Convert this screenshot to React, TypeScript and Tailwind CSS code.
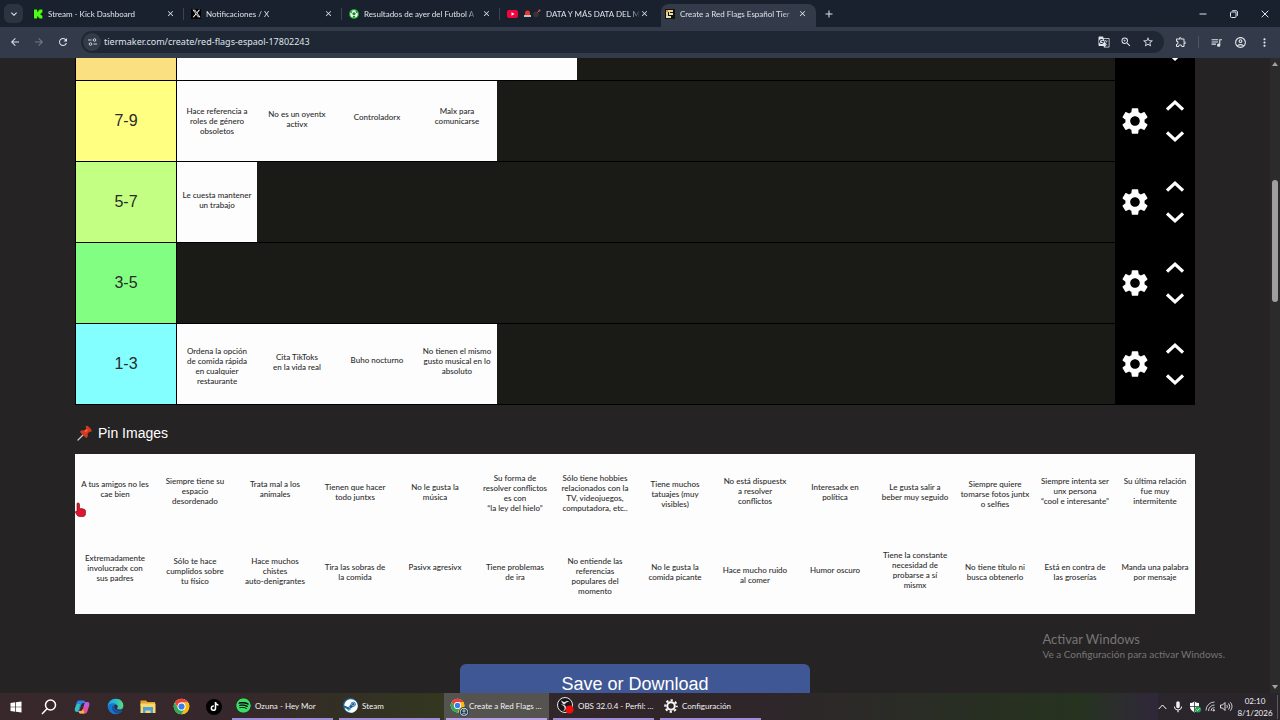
import React from "react";
import {
  MdGTranslate,
  MdZoomIn,
  MdStarBorder,
  MdOutlineExtension,
  MdQueueMusic,
  MdMoreVert,
  MdOutlineAccountCircle,
  MdSettings,
  MdArrowBack,
  MdArrowForward,
  MdRefresh,
  MdClose,
  MdAdd,
  MdMic,
  MdKeyboardArrowDown,
} from "react-icons/md";
import { FaXTwitter, FaSteam, FaTiktok, FaSpotify } from "react-icons/fa6";

type Card = { lines: string[]; top: string };

const T1 = "pt-[16px]";
const T2 = "pt-[19px]";
const T3 = "pt-[22px]";
const T4 = "pt-[25px]";
const T5 = "pt-[28px]";
const T6 = "pt-[31px]";

const blank: Card = { lines: [], top: T1 };

const tiers: { label: string; color: string; cards: Card[] }[] = [
  {
    label: "7-9",
    color: "bg-[#ffff82]",
    cards: [
      { lines: ["Hace referencia a", "roles de género", "obsoletos"], top: T4 },
      { lines: ["No es un oyentx", "activx"], top: T5 },
      { lines: ["Controladorx"], top: T6 },
      { lines: ["Malx para", "comunicarse"], top: T4 },
    ],
  },
  {
    label: "5-7",
    color: "bg-[#c3ff82]",
    cards: [{ lines: ["Le cuesta mantener", "un trabajo"], top: T5 }],
  },
  { label: "3-5", color: "bg-[#82ff82]", cards: [] },
  {
    label: "1-3",
    color: "bg-[#84ffff]",
    cards: [
      { lines: ["Ordena la opción", "de comida rápida", "en cualquier", "restaurante"], top: T3 },
      { lines: ["Cita TikToks", "en la vida real"], top: T5 },
      { lines: ["Buho nocturno"], top: T6 },
      { lines: ["No tienen el mismo", "gusto musical en lo", "absoluto"], top: T3 },
    ],
  },
];

const pool: Card[] = [
  { lines: ["A tus amigos no les", "cae bien"], top: T4 },
  { lines: ["Siempre tiene su", "espacio", "desordenado"], top: T3 },
  { lines: ["Trata mal a los", "animales"], top: T4 },
  { lines: ["Tienen que hacer", "todo juntxs"], top: T5 },
  { lines: ["No le gusta la", "música"], top: T5 },
  { lines: ["Su forma de", "resolver conflictos", "es con", "“la ley del hielo”"], top: T2 },
  { lines: ["Sólo tiene hobbies", "relacionados con la", "TV, videojuegos,", "computadora, etc.."], top: T2 },
  { lines: ["Tiene muchos", "tatuajes (muy", "visibles)"], top: T4 },
  { lines: ["No está dispuestx", "a resolver", "conflictos"], top: T3 },
  { lines: ["Interesadx en", "política"], top: T5 },
  { lines: ["Le gusta salir a", "beber muy seguido"], top: T5 },
  { lines: ["Siempre quiere", "tomarse fotos juntx", "o selfies"], top: T4 },
  { lines: ["Siempre intenta ser", "unx persona", "“cool e interesante”"], top: T3 },
  { lines: ["Su última relación", "fue muy", "intermitente"], top: T3 },
  { lines: ["Extremadamente", "involucradx con", "sus padres"], top: T2 },
  { lines: ["Sólo te hace", "cumplidos sobre", "tu físico"], top: T3 },
  { lines: ["Hace muchos", "chistes", "auto-denigrantes"], top: T3 },
  { lines: ["Tira las sobras de", "la comida"], top: T5 },
  { lines: ["Pasivx agresivx"], top: T5 },
  { lines: ["Tiene problemas", "de ira"], top: T5 },
  { lines: ["No entiende las", "referencias", "populares del", "momento"], top: T3 },
  { lines: ["No le gusta la", "comida picante"], top: T5 },
  { lines: ["Hace mucho ruido", "al comer"], top: T6 },
  { lines: ["Humor oscuro"], top: T6 },
  { lines: ["Tiene la constante", "necesidad de", "probarse a sí", "mismx"], top: T1 },
  { lines: ["No tiene título ni", "busca obtenerlo"], top: T5 },
  { lines: ["Está en contra de", "las groserías"], top: T5 },
  { lines: ["Manda una palabra", "por mensaje"], top: T5 },
];

function Tile({ card }: { card: Card }) {
  return (
    <div
      className={`h-20 w-20 shrink-0 bg-[#fdfdfd] text-center font-['Lato',sans-serif] text-[8px] leading-[10px] font-medium whitespace-nowrap text-[#2c2c2c] ${card.top}`}
    >
      {card.lines.map((line) => (
        <div key={line}>{line}</div>
      ))}
    </div>
  );
}

function Chevron({ down = false }: { down?: boolean }) {
  return (
    <svg width="18" height="11" viewBox="0 0 18 11" fill="none" stroke="#fff" strokeWidth="3.2" className={down ? "rotate-180" : ""}>
      <path d="M1 9.6 9 2.2l8 7.4" />
    </svg>
  );
}

function TierRow({ label, color, cards }: { label: string; color: string; cards: Card[] }) {
  return (
    <div className="flex w-full shrink-0 border-b border-l border-black bg-[#1a1a17]">
      <div className={`flex h-20 w-[101px] shrink-0 items-center justify-center border-r border-black pb-px text-base text-[#2a2a2a] ${color}`}>
        {label}
      </div>
      <div className="flex min-w-0 flex-1 flex-wrap">
        {cards.map((card, i) => (
          <Tile key={i} card={card} />
        ))}
      </div>
      <div className="grid w-20 shrink-0 grid-cols-2 place-items-center bg-black pb-px text-white">
        <button aria-label="Ajustes de la fila">
          <MdSettings size={32} />
        </button>
        <div className="flex flex-col gap-5">
          <button aria-label="Subir fila">
            <Chevron />
          </button>
          <button aria-label="Bajar fila">
            <Chevron down />
          </button>
        </div>
      </div>
    </div>
  );
}

function KickIcon() {
  return (
    <svg width="10" height="10" viewBox="0 0 10 10">
      <path fill="#0b1d08" d="M0 0h10v10H0z" />
      <path fill="#4dfc1b" d="M1 .5h3.2v2.2h1V1.6h1V.5h3.2v3.2H8.3v1H7.2v.8h1.1v1h1.1v3H6.2V8.400h-1v-1h-1v2.100H1z" />
    </svg>
  );
}

function BallIcon() {
  return (
    <svg width="10" height="10" viewBox="0 0 20 20">
      <circle cx="10" cy="10" r="10" fill="#18a52b" />
      <circle cx="10" cy="10" r="7.500" fill="#f4fff4" />
      <path fill="#18892a" d="m10 6 3.500 2.600-1.300 4H7.800l-1.300-4zM3 6l3-2 1 2-3 3zM14 3l3 3-1 3-3-3zM8 14h4l1 3H7z" />
    </svg>
  );
}

function YoutubeIcon() {
  return (
    <svg width="11" height="10" viewBox="0 0 22 20">
      <rect y="2" width="22" height="16" rx="4" fill="#f0063c" />
      <path fill="#fff" d="m9 6.500 6 3.500-6 3.500z" />
    </svg>
  );
}

function TierMakerIcon() {
  return (
    <svg width="10" height="10" viewBox="0 0 10 10">
      <path fill="#15130f" d="M0 0h10v10H0z" />
      <path fill="#e67b6b" d="M1 1h2v2H1z" />
      <path fill="#f0d37c" d="M3 1h5v2H3zM1 3h2v2H1z" />
      <path fill="#c9d68a" d="M4 3h1v2H4zM1 5h2v2H1z" />
      <path fill="#e9dfb0" d="M4 4h4v2H4zM1 7h5v2H1z" />
    </svg>
  );
}

function SirenBomb() {
  return (
    <svg width="18" height="9" viewBox="0 0 36 18" className="shrink-0">
      <path fill="#e8352f" d="M4 12V8a5 5 0 0 1 10 0v4z" />
      <path fill="#b9c0c9" d="M2 12h14v4H2z" />
      <circle cx="26" cy="11" r="5.500" fill="#3a3235" />
      <path d="m29 7 4-4" stroke="#c9743c" strokeWidth="2" />
      <circle cx="33" cy="3" r="2" fill="#e0533a" />
    </svg>
  );
}

function ChromeIcon({ size = 16 }: { size?: number }) {
  return (
    <svg width={size} height={size} viewBox="0 0 48 48">
      <circle cx="24" cy="24" r="22" fill="#fff" />
      <path fill="#ea4335" d="M24 13h19A22 22 0 0 0 5 13l9.500 16.500A11 11 0 0 1 24 13z" />
      <path fill="#fbbc05" d="M43 13H24a11 11 0 0 1 9.500 16.500L24 46A22 22 0 0 0 43 13z" />
      <path fill="#34a853" d="M5 13a22 22 0 0 0 19 33l9.500-16.500a11 11 0 0 1-19 0z" />
      <circle cx="24" cy="24" r="11" fill="#fff" />
      <circle cx="24" cy="24" r="8.700" fill="#3b7ded" />
    </svg>
  );
}

function EdgeIcon() {
  return (
    <svg width="17" height="17" viewBox="0 0 48 48">
      <defs>
        <linearGradient id="edgeTop" x1="0" y1="0" x2="1" y2="0">
          <stop offset="0" stopColor="#1d9fe0" />
          <stop offset="0.6" stopColor="#2fc2c8" />
          <stop offset="1" stopColor="#5fdb6a" />
        </linearGradient>
      </defs>
      <circle cx="24" cy="24" r="22" fill="#1577ce" />
      <path fill="url(#edgeTop)" d="M2 23C4 10 13 2 25 2c12 0 21 8 21 19 0 7-5 11-11 11-4 0-7-1-7-3 0-1 2-2 2-5 0-5-5-9-12-9C10 15 4 18 2 23z" />
      <path fill="#14519f" d="M18 20c-4 4-5 11-1 17 4 6 11 8 17 6 4-1 8-4 10-8-5 3-13 3-18 0-5-3-8-8-8-15z" />
      <path fill="#3a292e" d="M20 23c0 6 5 12 13 13 5 .4 9-1 12-3l1-5c-2 3-6 5-11 5-5 0-8-2-7-4 1-1 2-2 2-5 0-3-2-5-5-5s-5 1-5 4z" />
    </svg>
  );
}

function CopilotIcon() {
  return (
    <svg width="16" height="16" viewBox="0 0 32 32">
      <path fill="#2a84e8" d="M10 3h9c3 0 3 2 4 5h-4c-3 0-4 2-5 5l-3 9c-1 3-2 4-5 4-5 0-5-4-4-8l3-10c1-3 2-5 5-5z" />
      <path fill="#33c4ae" d="M6 10h6L8 25c-5 1-7-2-6-6z" />
      <path fill="#e9508f" d="M22 29h-9c-3 0-3-2-4-5h4c3 0 4-2 5-5l3-9c1-3 2-4 5-4 5 0 5 4 4 8l-3 10c-1 3-2 5-5 5z" />
      <path fill="#b75ddd" d="M21 10c1-3 2-4 5-4 5 0 5 4 4 8l-1 3h-10z" />
      <path fill="#f7b043" d="M13 29c-3 0-3-2-4-5h4c2 0 4-1 5-4l3 9z" />
    </svg>
  );
}

function FolderIcon() {
  return (
    <svg width="16" height="15" viewBox="0 0 32 28">
      <path fill="#e5a52c" d="M1 2h11l3 3h15v8H1z" />
      <path fill="#fbd868" d="M1 8h30v19H1z" />
      <path fill="#4aa2dc" d="M6 15h20v12h-5v-5H11v5H6z" />
    </svg>
  );
}

function ObsIcon() {
  return (
    <svg width="17" height="17" viewBox="0 0 34 34">
      <circle cx="16" cy="16" r="15" fill="#17151a" stroke="#e8e8e8" strokeWidth="2" />
      <path
        fill="#dcdcdc"
        d="M9 6c-1 5 2 8 7 9 1-4 5-6 9-4-2-4-7-4-9-1-3 0-6-1-7-4zM6 17c4-2 8 0 9 4 1 3-1 6-4 7 7 0 9-6 6-10-3-4-8-4-11-1z"
      />
      <circle cx="25" cy="25" r="8" fill="#f20d0d" />
    </svg>
  );
}

function GearOutline() {
  return (
    <svg width="14" height="14" viewBox="0 0 28 28" fill="none" stroke="#fff">
      <circle cx="14" cy="14" r="7.500" strokeWidth="4" />
      <circle cx="14" cy="14" r="11.500" strokeWidth="4" strokeDasharray="4.520 4.510" strokeDashoffset="2.260" />
    </svg>
  );
}

function PinIcon() {
  return (
    <svg width="16" height="16" viewBox="0 0 32 32">
      <path d="M2 30 14 18" stroke="#c3c9d2" strokeWidth="2.500" strokeLinecap="round" />
      <path fill="#d63a1e" d="M18 2c2-1 4 0 7 3s5 5 4 8c-1 1-3 1-4 0l-4 5c1 3 1 5-1 7-1 1-2 1-3 0L7 15c-1-1-1-2 0-3 2-2 4-2 7-1l5-4c-2-2-2-4-1-5z" />
      <path fill="#f2643f" d="m19 8 3 3-5 4-2-3z" />
    </svg>
  );
}

function HandCursor() {
  return (
    <svg width="11" height="15" viewBox="0 0 22 30">
      <path
        fill="#e0152b"
        stroke="#5d0710"
        strokeWidth="1.200"
        d="M6 2c2 0 3 1 3 3v8c5 0 12 1 12 5v5c0 4-2 6-5 6H9c-4 0-5-3-8-8-1-2 1-3 3-2V5c0-2 0-3 2-3z"
      />
    </svg>
  );
}

const tabs = [
  { title: "Stream - Kick Dashboard", icon: <KickIcon /> },
  {
    title: "Notificaciones / X",
    icon: (
      <span className="flex size-[10px] items-center justify-center bg-black text-white">
        <FaXTwitter size={9} />
      </span>
    ),
  },
  { title: "Resultados de ayer del Futbol A", icon: <BallIcon /> },
  { title: "DATA Y MÁS DATA DEL M", icon: <YoutubeIcon />, extra: <SirenBomb /> },
  { title: "Create a Red Flags Español Tier", icon: <TierMakerIcon />, active: true },
];

function TabStrip() {
  return (
    <header className="flex h-[27px] shrink-0 bg-[#19212f] pl-1 text-[#dfe3ea]">
      <button aria-label="Buscar pestañas" className="mt-1 mr-[6px] flex size-[19px] items-center justify-center rounded-md bg-[#2c3442]">
        <MdKeyboardArrowDown size={12} />
      </button>
      {tabs.map((tab, i) => (
        <div
          key={tab.title}
          className={
            tab.active
              ? "mt-1 mr-[3px] flex h-[23px] w-[155px] items-center rounded-t-lg bg-[#333b4a] pb-1 pl-1"
              : "mt-1 mr-[3px] flex h-[23px] w-[155px] items-center pb-1 pl-1"
          }
        >
          <button className="flex h-full min-w-0 flex-1 items-center gap-[5px] text-left">
            <span className="shrink-0">{tab.icon}</span>
            {tab.extra}
            <span className="flex-1 mask-r-from-90% text-[8px] leading-3 whitespace-nowrap">{tab.title}</span>
          </button>
          <button aria-label="Cerrar pestaña" className="mr-2 ml-1">
            <MdClose size={9} />
          </button>
          <span className={i < 3 ? "h-3 w-px bg-[#3a4352]" : "h-3 w-px"} />
        </div>
      ))}
      <button aria-label="Nueva pestaña" className="ml-[2px] flex h-[27px] w-4 items-center justify-center">
        <MdAdd size={12} />
      </button>
      <div className="ml-auto flex">
        <button aria-label="Minimizar" className="flex w-[31px] items-center justify-center">
          <svg width="8" height="8" viewBox="0 0 8 8" stroke="currentColor">
            <path d="M.5 4h7" />
          </svg>
        </button>
        <button aria-label="Restaurar" className="flex w-[31px] items-center justify-center">
          <svg width="8" height="8" viewBox="0 0 8 8" fill="none" stroke="currentColor">
            <rect x=".5" y="2" width="5.500" height="5.500" rx="1" />
            <path d="M2.200.7h4a1.200 1.200 0 0 1 1.200 1.200v4" />
          </svg>
        </button>
        <button aria-label="Cerrar" className="flex w-[31px] items-center justify-center">
          <svg width="8" height="8" viewBox="0 0 8 8" stroke="currentColor">
            <path d="m.7.700 6.600 6.600M7.300.7.700 7.300" />
          </svg>
        </button>
      </div>
    </header>
  );
}

function Toolbar() {
  return (
    <nav className="flex h-[31px] shrink-0 items-center bg-[#333b4a] pb-px text-[#dfe3ea]">
      <div className="flex w-[81px] items-center gap-3 pl-[9px]">
        <button aria-label="Atrás">
          <MdArrowBack size={12} />
        </button>
        <button aria-label="Adelante" className="text-[#747c89]">
          <MdArrowForward size={12} />
        </button>
        <button aria-label="Recargar">
          <MdRefresh size={12} />
        </button>
      </div>
      <div className="flex h-[22px] flex-1 items-center rounded-full bg-[#1f2735] pr-[10px] pl-[2px]">
        <button aria-label="Información del sitio" className="flex size-[18px] items-center justify-center rounded-full bg-[#333b4a]">
          <svg width="9" height="8" viewBox="0 0 18 16" fill="none" stroke="currentColor" strokeWidth="1.800">
            <path d="M0 4h7M11 12h7" />
            <circle cx="13" cy="4" r="2.600" />
            <circle cx="5" cy="12" r="2.600" />
          </svg>
        </button>
        <input
          aria-label="Dirección"
          defaultValue="tiermaker.com/create/red-flags-espaol-17802243"
          className="ml-[3px] min-w-0 flex-1 bg-transparent text-[9px] outline-none font-['Noto_Sans',sans-serif]"
        />
        <div className="flex items-center gap-[10px]">
          <button aria-label="Traducir">
            <MdGTranslate size={12} />
          </button>
          <button aria-label="Zoom">
            <MdZoomIn size={12} />
          </button>
          <button aria-label="Favorito">
            <MdStarBorder size={12} />
          </button>
        </div>
      </div>
      <div className="flex items-center gap-[11px] pr-[9px] pl-[11px]">
        <button aria-label="Extensiones">
          <MdOutlineExtension size={12} />
        </button>
        <span className="h-3 w-px bg-[#4c5564]" />
        <button aria-label="Control multimedia">
          <MdQueueMusic size={13} />
        </button>
        <button aria-label="Perfil">
          <MdOutlineAccountCircle size={13} />
        </button>
        <button aria-label="Menú">
          <MdMoreVert size={13} />
        </button>
      </div>
    </nav>
  );
}

function Scrollbar() {
  return (
    <div className="flex w-[10px] shrink-0 flex-col items-center justify-between bg-[#2b2b2b] py-1">
      <svg width="6" height="4" viewBox="0 0 6 4">
        <path fill="#a3a3a3" d="M3 0 6 4H0z" />
      </svg>
      <div className="flex w-full flex-1 flex-col items-center">
        <div className="grow-[114]" />
        <div className="w-[6px] grow-[122] rounded-full bg-[#9f9f9f]" />
        <div className="grow-[383]" />
      </div>
      <svg width="6" height="4" viewBox="0 0 6 4">
        <path fill="#a3a3a3" d="M0 0h6L3 4z" />
      </svg>
    </div>
  );
}

const launchers = [
  {
    name: "Inicio",
    icon: (
      <svg width="12" height="12" viewBox="0 0 24 24" fill="#fff">
        <path d="M1 4 10.500 2.700v8.600H1zM12 2.500 23 1v10.300H12zM1 12.700h9.500v8.600L1 20zM12 12.700h11V23l-11-1.500z" />
      </svg>
    ),
  },
  {
    name: "Buscar",
    icon: (
      <svg width="16" height="16" viewBox="0 0 16 16" fill="none" stroke="#fff" strokeWidth="1.500">
        <circle cx="9.500" cy="6" r="5" />
        <path d="M6 9.800 1 15" />
      </svg>
    ),
  },
  { name: "Copilot", icon: <CopilotIcon /> },
  { name: "Edge", icon: <EdgeIcon /> },
  { name: "Explorador de archivos", icon: <FolderIcon /> },
  { name: "Chrome", icon: <ChromeIcon size={17} /> },
  {
    name: "TikTok",
    icon: (
      <span className="flex size-4 items-center justify-center rounded-full bg-black text-white">
        <FaTiktok size={9} />
      </span>
    ),
  },
];

const apps = [
  {
    title: "Ozuna - Hey Mor",
    icon: (
      <span className="flex rounded-full bg-black text-[#3ddc68]">
        <FaSpotify size={15} />
      </span>
    ),
  },
  {
    title: "Steam",
    icon: (
      <span className="flex size-[15px] items-center justify-center rounded-full bg-[#17659a] text-white">
        <FaSteam size={14} />
      </span>
    ),
  },
  {
    title: "Create a Red Flags ...",
    icon: (
      <span className="relative flex">
        <ChromeIcon size={15} />
        <span className="absolute -right-1 -bottom-1 flex size-[10px] items-center justify-center rounded-full bg-[#26384b] text-[#c8d6e2]">
          <MdOutlineAccountCircle size={10} />
        </span>
      </span>
    ),
    active: true,
  },
  { title: "OBS 32.0.4 - Perfil: ...", icon: <ObsIcon /> },
  { title: "Configuración", icon: <GearOutline /> },
];

function Taskbar() {
  return (
    <footer className="flex h-[27px] shrink-0 bg-linear-to-r from-[#38282c] via-[#30262a] to-[#29252b] text-[#f1f1f1]">
      <div className="flex gap-px pr-[2px]">
        {launchers.map((item) => (
          <button key={item.name} aria-label={item.name} className="flex w-8 items-center justify-center">
            {item.icon}
          </button>
        ))}
      </div>
      <div className="flex gap-[6px] bg-linear-to-r from-transparent via-[#33371f] via-40% to-transparent to-60%">
        {apps.map((app) => (
          <button
            key={app.title}
            className={
              app.active
                ? "flex w-[101px] items-center gap-1 border-b-2 border-[#b9a2e6] bg-[#55534f] pl-1 text-[8px] whitespace-nowrap shadow-[-2px_0_#55534f,2px_0_#55534f]"
                : "flex w-[101px] items-center gap-1 border-b-2 border-[#a08bd6] pl-1 text-[8px] whitespace-nowrap"
            }
          >
            <span className="shrink-0">{app.icon}</span>
            {app.title}
          </button>
        ))}
      </div>
      <div className="min-w-0 flex-1 bg-linear-to-r from-transparent via-[#26331f] via-80% to-[#30273a]" />
      <div className="flex items-center gap-1 pr-[2px]">
        <button aria-label="Mostrar iconos ocultos">
          <svg width="9" height="6" viewBox="0 0 9 6" fill="none" stroke="#fff">
            <path d="m.7 5 3.800-4 3.800 4" />
          </svg>
        </button>
        <MdMic size={14} />
        <svg width="12" height="12" viewBox="0 0 24 24">
          <path fill="#fff" d="M11 1c3 2 6 3 9 3v7c0 6-4 9-9 12-5-3-9-6-9-12V4c3 0 6-1 9-3z" />
          <path stroke="#29252b" strokeWidth="1.500" d="M11 1v21M2 11h18" />
          <circle cx="18" cy="17" r="6" fill="#23a455" />
          <path d="m15 17 2 2 4-4" fill="none" stroke="#fff" strokeWidth="1.600" />
        </svg>
        <svg width="11" height="11" viewBox="0 0 22 22" fill="none" stroke="#c9c9c9" strokeWidth="2">
          <path d="M2 19A17 17 0 0 1 19 2M7 20A12 12 0 0 1 19 8M12 20a7 7 0 0 1 7-7" />
          <circle cx="17.500" cy="18.500" r="1.500" fill="#fff" />
        </svg>
        <svg width="13" height="11" viewBox="0 0 26 22" fill="none" stroke="#eee" strokeWidth="1.800">
          <path d="M1 8h4l5-5v16l-5-5H1zM13.500 8c1.500 2 1.500 4 0 6M17 5c3 4 3 8 0 12M20.500 2.500c4.500 5 4.500 12 0 17" />
        </svg>
        <div className="w-9 text-center text-[8px] leading-3">
          <div>02:10</div>
          <div>8/1/2026</div>
        </div>
        <span className="h-6 w-px bg-[#5c5860]" />
      </div>
    </footer>
  );
}

export default function App() {
  return (
    <div className="flex h-screen flex-col overflow-hidden bg-[#252324] font-['Lato',sans-serif]">
      <TabStrip />
      <Toolbar />
      <div className="relative flex min-h-0 flex-1">
        <main className="min-w-0 flex-1 overflow-hidden font-['Liberation_Sans',sans-serif]">
          <div className="mx-auto max-w-[1120px]">
            <div className="flex h-[23px] items-end overflow-hidden">
              <TierRow label="" color="bg-[#fbe082]" cards={[blank, blank, blank, blank, blank]} />
            </div>
            {tiers.map((tier) => (
              <TierRow key={tier.label} {...tier} />
            ))}
            <h2 className="flex h-[49px] items-center gap-[5px] pt-[7px] pl-[2px] text-sm text-white">
              <PinIcon />
              Pin Images
            </h2>
            <section className="relative flex flex-wrap bg-[#fdfdfd]">
              {pool.map((card, i) => (
                <Tile key={i} card={card} />
              ))}
              <div className="pointer-events-none absolute top-12 left-0">
                <HandCursor />
              </div>
            </section>
            <button className="mx-auto mt-[50px] block h-10 w-full max-w-[350px] rounded-md bg-[#3f5794] text-lg leading-10 text-white">
              Save or Download
            </button>
          </div>
        </main>
        <Scrollbar />
        <aside className="pointer-events-none absolute right-[55px] bottom-8 text-[#777576]">
          <div className="text-[13px] leading-4">Activar Windows</div>
          <div className="text-[10px] leading-[14px]">Ve a Configuración para activar Windows.</div>
        </aside>
      </div>
      <Taskbar />
    </div>
  );
}
